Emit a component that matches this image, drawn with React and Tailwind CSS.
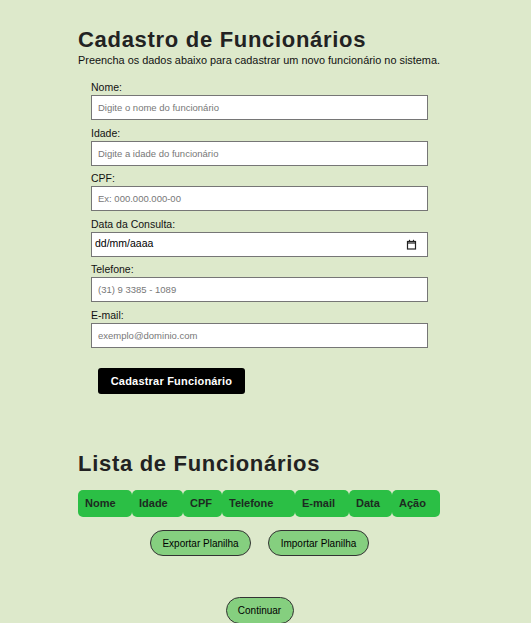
import { useState } from "react";

const campos = [
    { label: "Nome:", placeholder: "Digite o nome do funcionário" },
    { label: "Idade:", placeholder: "Digite a idade do funcionário" },
    { label: "CPF:", placeholder: "Ex: 000.000.000-00" },
    { label: "Data da Consulta:", date: true },
    { label: "Telefone:", placeholder: "(31) 9 3385 - 1089" },
    { label: "E-mail:", placeholder: "exemplo@dominio.com" },
];

const colunas = [
    { nome: "Nome", w: "w-[54px]" },
    { nome: "Idade", w: "w-[51px]" },
    { nome: "CPF", w: "w-[39px]" },
    { nome: "Telefone", w: "w-[73px]" },
    { nome: "E-mail", w: "w-[54px]" },
    { nome: "Data", w: "w-[43px]" },
    { nome: "Ação", w: "w-[48px]" },
];

function CalendarIcon() {
    return (
        <svg width="11" height="11" viewBox="0 0 11 11" fill="none" stroke="#222" strokeWidth="1.2">
            <rect x="1.5" y="2.5" width="8" height="7.5" />
            <line x1="1.5" y1="4" x2="9.5" y2="4" />
            <line x1="3.5" y1="0.8" x2="3.5" y2="2.5" />
            <line x1="7.5" y1="0.8" x2="7.5" y2="2.5" />
        </svg>
    );
}

export default function App() {
    const [valores, setValores] = useState({});

    return (
        <div className="min-h-[623px] bg-[#dde9cb] font-['Liberation_Sans',Arial,sans-serif] text-[#222]">
            <div className="ml-[78px] w-[363px] pt-[28px]">
                <h1 className="text-[22px] font-bold leading-[24px] tracking-[0.7px] text-[#222]">
                    Cadastro de Funcionários
                </h1>
                <p className="mt-[2px] whitespace-nowrap text-[10.9px] leading-[13px] text-[#111]">
                    Preencha os dados abaixo para cadastrar um novo funcionário no sistema.
                </p>

                <form className="ml-[13px] mt-[14px] flex flex-col gap-[6.5px]" onSubmit={(e) => e.preventDefault()}>
                    {campos.map((c) => (
                        <div key={c.label}>
                            <label className="block text-[10.5px] leading-[13px] text-[#111]">{c.label}</label>
                            {c.date ? (
                                <div className="mt-[1px] flex h-[25px] w-[337px] items-center justify-between border border-[#767676] bg-white pl-[3px] pr-[10px] text-[10.5px] text-black">
                                    <span>dd/mm/aaaa</span>
                                    <CalendarIcon />
                                </div>
                            ) : (
                                <input
                                    type="text"
                                    value={valores[c.label] || ""}
                                    onChange={(e) => setValores({ ...valores, [c.label]: e.target.value })}
                                    placeholder={c.placeholder}
                                    className="mt-[1px] block h-[25px] w-[337px] border border-[#767676] bg-white px-[6px] text-[9.5px] text-black outline-none placeholder:text-[#777]"
                                />
                            )}
                        </div>
                    ))}

                    <button
                        type="submit"
                        className="ml-[7px] mt-[14px] h-[26px] w-[147px] rounded-[3px] bg-black text-[11px] font-bold tracking-[0.2px] text-white"
                    >
                        Cadastrar Funcionário
                    </button>
                </form>

                <h2 className="mt-[58px] text-[22px] font-bold leading-[24px] tracking-[0.7px] text-[#222]">
                    Lista de Funcionários
                </h2>

                <div className="mt-[14px] flex">
                    {colunas.map((c) => (
                        <div
                            key={c.nome}
                            className={`${c.w} flex h-[27px] items-center rounded-[5px] bg-[#2bbf45] pl-[7px] text-[11px] font-bold text-[#1d2a21]`}
                        >
                            {c.nome}
                        </div>
                    ))}
                </div>

                <div className="mt-[13px] flex justify-center gap-[17px]">
                    <button className="h-[26px] w-[101px] rounded-full border border-[#333] bg-[#85cf7f] text-[10px] text-black">
                        Exportar Planilha
                    </button>
                    <button className="h-[26px] w-[101px] rounded-full border border-[#333] bg-[#85cf7f] text-[10px] text-black">
                        Importar Planilha
                    </button>
                </div>

                <div className="mt-[41px] flex justify-center">
                    <button className="h-[27px] w-[68px] rounded-full border border-[#333] bg-[#85cf7f] text-[10px] text-black">
                        Continuar
                    </button>
                </div>
            </div>
        </div>
    );
}
